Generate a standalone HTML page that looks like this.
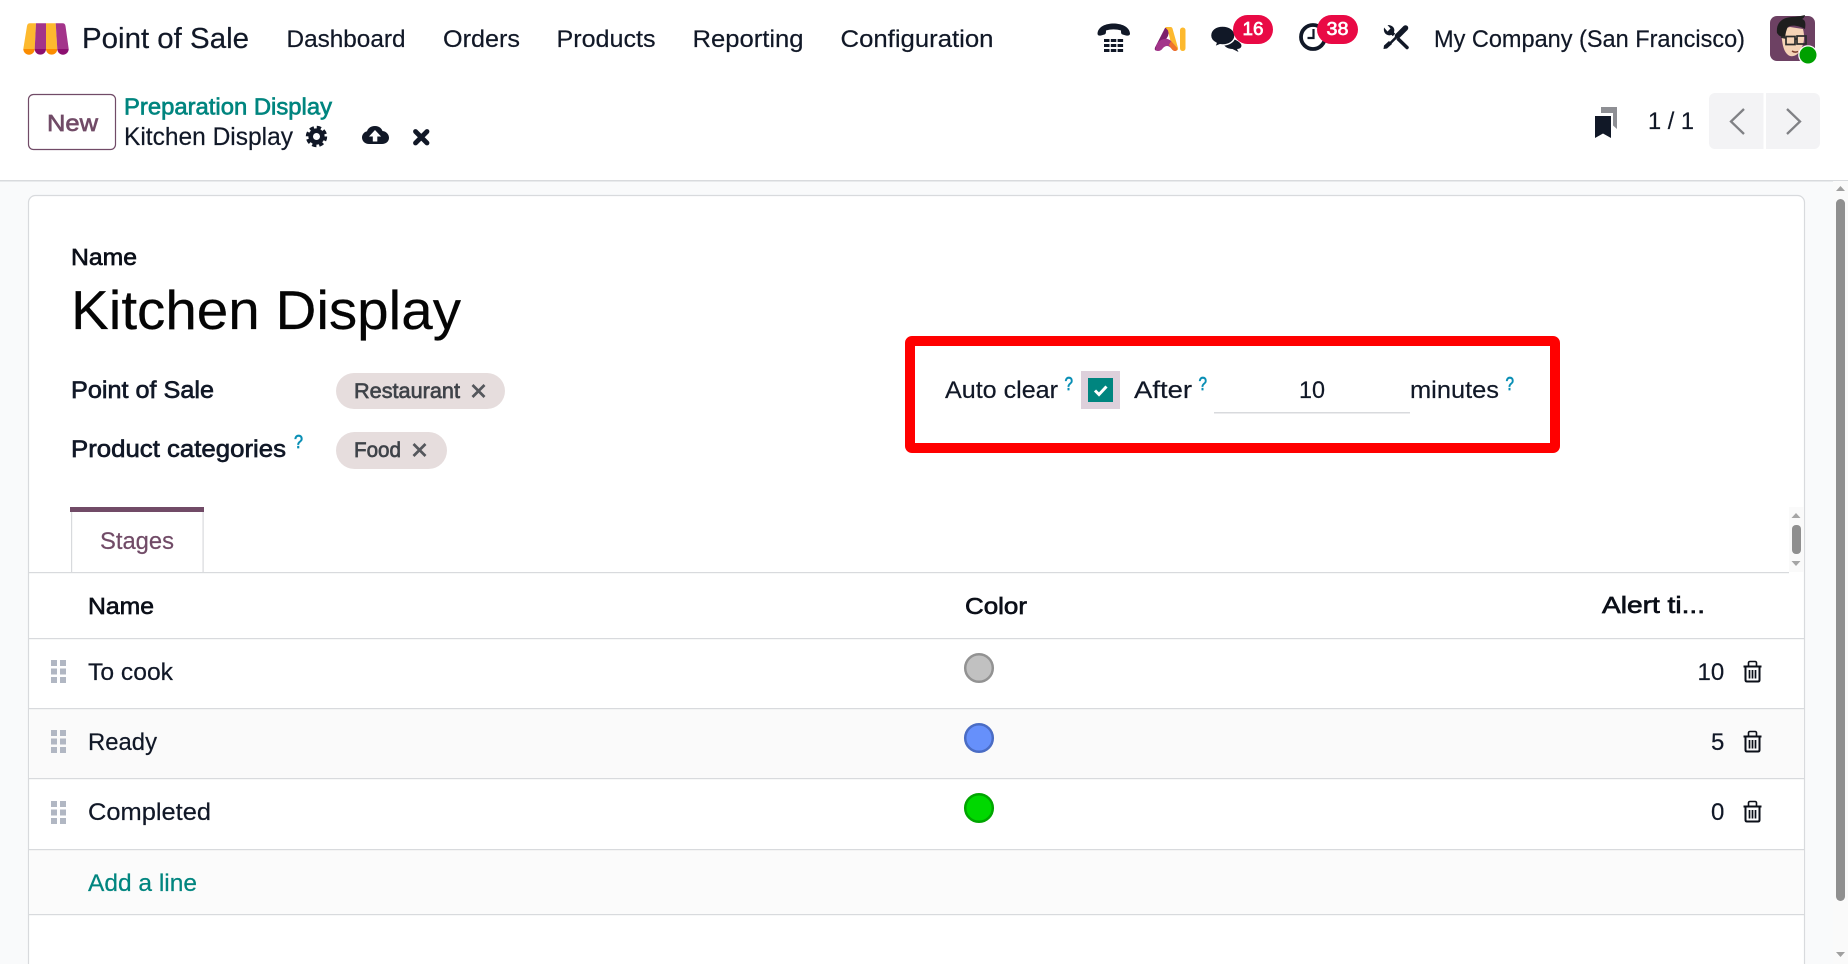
<!DOCTYPE html>
<html lang="en"><head><meta charset="utf-8"><title>Kitchen Display</title>
<style>
html,body{margin:0;padding:0;width:1848px;height:964px;overflow:hidden;background:#fff}
svg{display:block;position:absolute;left:0;top:0}
text{font-family:"Liberation Sans",sans-serif;fill:#111827;stroke:#111827;stroke-width:.2px}
text.m{stroke:currentColor;stroke-width:.65px}
text.l{stroke:currentColor;stroke-width:.2px}
</style></head><body>
<svg width="1848" height="964" viewBox="0 0 1848 964" xmlns="http://www.w3.org/2000/svg">
<!-- backgrounds -->
<rect width="1848" height="964" fill="#fff"/>
<rect y="181" width="1848" height="783" fill="#f9fafb"/>
<rect y="180" width="1848" height="1.5" fill="#d8dadd"/>
<rect x="28.5" y="195.5" width="1776" height="790" rx="7" fill="#fff" stroke="#d8dadd" stroke-width="1.2"/>
<!-- main scrollbar -->
<rect x="1833" y="181" width="15" height="783" fill="#fafafa"/>
<rect x="1836" y="199" width="9" height="702" rx="4.5" fill="#8f8f8f"/>
<path d="M1836 191l4.500-5 4.500 5z" fill="#a0a0a0"/><path d="M1836 952l4.500 5 4.500-5z" fill="#a0a0a0"/>

<!-- logo -->
<path d="M30 23.300H36L34.700 49H23.300L27 26Q27.500 23.300 30 23.300z" fill="#fdb92e"/>
<path d="M36 23.300H46V49H34.700z" fill="#a3348a"/>
<path d="M46 23.300H55.700L57.300 49H46z" fill="#fdb92e"/>
<path d="M55.700 23.300H62.500Q65 23.300 65.500 26L68.700 49H57.300z" fill="#a3348a"/>
<path d="M23.300 49h11.400a5.700 5.700 0 0 1-11.400 0z" fill="#fb8c00"/>
<path d="M34.700 49H46a5.650 5.650 0 0 1-11.300 0z" fill="#8c0f70"/>
<path d="M46 49h11.300a5.650 5.650 0 0 1-11.300 0z" fill="#fb8c00"/>
<path d="M57.300 49h11.400a5.700 5.700 0 0 1-11.400 0z" fill="#8c0f70"/>

<!-- navbar text -->
<text x="82" y="48" font-size="29" textLength="167" lengthAdjust="spacingAndGlyphs">Point of Sale</text>
<text x="286.500" y="47" font-size="24" textLength="119" lengthAdjust="spacingAndGlyphs">Dashboard</text>
<text x="443" y="47" font-size="24" textLength="77" lengthAdjust="spacingAndGlyphs">Orders</text>
<text x="556.500" y="47" font-size="24" textLength="99" lengthAdjust="spacingAndGlyphs">Products</text>
<text x="692.500" y="47" font-size="24" textLength="111" lengthAdjust="spacingAndGlyphs">Reporting</text>
<text x="840.500" y="47" font-size="24" textLength="153" lengthAdjust="spacingAndGlyphs">Configuration</text>

<!-- phone -->
<path d="M1097.500 33.500C1098 26.500 1106 23.500 1113.500 23.500S1129.500 26.500 1130 33.500C1130 35.500 1128 36 1126 35.500L1122.500 34.500C1121 34 1121 32.500 1121 30.500C1116 29 1111 29 1106 30.500C1106 32.500 1106 34 1104.500 34.500L1101 35.500C1099 36 1097.500 35.500 1097.500 33.500Z" fill="#111827"/>
<g fill="#111827">
<rect x="1104" y="39" width="5.500" height="3"/><rect x="1110.800" y="39" width="5.500" height="3"/><rect x="1117.600" y="39" width="5.500" height="3"/>
<rect x="1104" y="44" width="5.500" height="3"/><rect x="1110.800" y="44" width="5.500" height="3"/><rect x="1117.600" y="44" width="5.500" height="3"/>
<rect x="1104" y="49" width="5.500" height="3"/><rect x="1110.800" y="49" width="5.500" height="3"/><rect x="1117.600" y="49" width="5.500" height="3"/>
</g>
<!-- AI -->
<path d="M1165 28h5l-2 8-6 10-5 4.500q-3 .5-2-3z" fill="#7d1f6c"/>
<path d="M1165 27h5.500q1.500 0 2 1.500l5.500 19.500q.5 2.500-2 2.500l-5-7-3-13z" fill="#fdb92e"/>
<path d="M1156 48q0-5 5-8 6-3 10 1l6 7q.5 3-2 3-2 0-4-3-4-4-8 0-2 3-5 3t-2-3z" fill="#a3348a"/>
<path d="M1171 41l6 7q.5 3-2 3-2 0-4-3l-2-3z" fill="#f0742a"/>
<rect x="1180" y="27.500" width="5.500" height="23.500" rx="2.700" fill="#fdb92e"/>
<!-- chat -->
<path d="M1226 38c6 0 12 2 15 6 1.500 3-1 5-4 5l1.500 3-6-3c-4 0-8-2-9-5z" fill="#111827"/>
<path d="M1222.500 26c7 0 12.500 4 12.500 9.500s-5.500 9.500-12.500 9.500l-2.500-.2-5.500 2.200 1.500-3.800c-3.300-1.700-5.500-4.500-5.500-7.700 0-5.500 5-9.500 12-9.500z" fill="#111827" stroke="#fff" stroke-width="1.500"/>
<rect x="1233" y="15" width="40" height="29" rx="14.500" fill="#e90a45"/>
<text x="1242.500" y="35" font-size="18" color="#fff" style="fill:#fff" textLength="21" lengthAdjust="spacingAndGlyphs" class="m">16</text>
<!-- clock -->
<circle cx="1313" cy="37" r="12" fill="none" stroke="#111827" stroke-width="3.800"/>
<path d="M1313.500 29v9h-6" fill="none" stroke="#111827" stroke-width="2.200"/>
<rect x="1317" y="15" width="41" height="29" rx="14.500" fill="#e90a45"/>
<text x="1326.500" y="35" font-size="18" color="#fff" style="fill:#fff" textLength="22" lengthAdjust="spacingAndGlyphs" class="m">38</text>
<!-- tools -->
<path d="M1391 32l16 15.500" stroke="#111827" stroke-width="3.500" stroke-linecap="round" fill="none"/>
<path d="M1384 27.500q-.8 5 2.500 7t6.500-.5q2.500-3.500.5-6.500-2-2.500-6-2.500l3 3.500-3 3-3.500-4z" fill="#111827"/>
<path d="M1398 34.500l-5.500 5.500" stroke="#fff" stroke-width="5" fill="none"/>
<path d="M1405.500 28l-8 8" stroke="#111827" stroke-width="5.500" stroke-linecap="round" fill="none"/>
<path d="M1397 36.500l-7 7" stroke="#111827" stroke-width="2.600" fill="none"/>
<path d="M1389 41l3 3-5 4.500-3.500.5.500-3.500z" fill="#111827"/>
<text x="1434" y="47" font-size="24" textLength="311" lengthAdjust="spacingAndGlyphs">My Company (San Francisco)</text>
<!-- avatar -->
<rect x="1770" y="16" width="45" height="45" rx="7" fill="#6d4163"/>
<path d="M1782 40c-1-9 2-12 8-13l13 2c2 8 1 14-1 18-3 7-7 10-12 9-5-2-7-8-8-16z" fill="#f5d3b6"/>
<path d="M1777 33c-1-8 3-13 9-15 6-1.500 12-1 19-3-.5 2-1 3-3 4 3 1 4 3 3 10-5-3-11-4-15-3-3 1-3 3-4 6l-1 5-4-.5-2-1z" fill="#1e1e1e"/>
<g fill="none" stroke="#2b2b2b" stroke-width="1.700"><rect x="1786" y="36.500" width="9" height="8"/><rect x="1797" y="36" width="9" height="8"/><path d="M1781 37l5 1M1795 39h2"/></g>
<path d="M1792 51q3 2 6 .5" stroke="#7a3b2b" stroke-width="1.500" fill="none"/>
<circle cx="1808" cy="55" r="9.800" fill="#fff"/><circle cx="1808" cy="55" r="8.500" fill="#00a000"/>

<!-- control panel -->
<rect x="28.500" y="94.500" width="87" height="55" rx="5" fill="#fff" stroke="#714b67" stroke-width="1.200"/>
<text x="47" y="131" font-size="23" style="fill:#714b67" color="#714b67" class="m" textLength="51" lengthAdjust="spacingAndGlyphs">New</text>
<text x="124" y="114.500" font-size="23" style="fill:#00857f" color="#00857f" class="m" textLength="208" lengthAdjust="spacingAndGlyphs">Preparation Display</text>
<text x="124" y="145" font-size="25" textLength="169" lengthAdjust="spacingAndGlyphs">Kitchen Display</text>
<!-- gear -->
<circle cx="316.500" cy="136.500" r="8.700" fill="none" stroke="#111827" stroke-width="4" stroke-dasharray="4.100 2.730"/>
<circle cx="316.500" cy="136.500" r="5.800" fill="none" stroke="#111827" stroke-width="4.600"/>
<!-- cloud upload -->
<path d="M369 144c-4 0-7-3-7-6.500 0-3 2-5.500 5-6.300 1-3 4-5.200 8-5.200 3.500 0 6.500 2 7.500 5 4 .5 6.500 3.500 6.500 6.800 0 3.700-3 6.200-7 6.200z" fill="#111827"/>
<path d="M375 130l-6 6.500h3.800v5h4.500v-5h3.800z" fill="#fff"/>
<!-- discard x -->
<path d="M415.500 131.500l11.500 11.500M427 131.500l-11.500 11.500" stroke="#111827" stroke-width="4.800" stroke-linecap="round" fill="none"/>

<!-- pager -->
<path d="M1601 107h16v22l-4-3.500V113h-12z" fill="#8e8f94"/>
<path d="M1595 116h16v22l-8-4.500-8 4.500z" fill="#111827" stroke="#fff" stroke-width="0"/>
<text x="1648" y="129" font-size="24" textLength="46" lengthAdjust="spacingAndGlyphs">1 / 1</text>
<path d="M1715 93h48.500v56H1715a6 6 0 0 1-6-6V99a6 6 0 0 1 6-6z" fill="#f3f3f5"/>
<path d="M1766 93h48a6 6 0 0 1 6 6v44a6 6 0 0 1-6 6h-48z" fill="#f3f3f5"/>
<path d="M1744 109l-13 12.500 13 12.500" fill="none" stroke="#808185" stroke-width="2.300"/>
<path d="M1787 109l13 12.500-13 12.500" fill="none" stroke="#808185" stroke-width="2.300"/>

<!-- form -->
<text x="71" y="265" font-size="23" style="fill:#0b0f18" color="#0b0f18" class="m" textLength="66" lengthAdjust="spacingAndGlyphs">Name</text>
<text x="71" y="329" font-size="55" style="fill:#050505;stroke:#050505" textLength="390" lengthAdjust="spacingAndGlyphs">Kitchen Display</text>
<text x="71" y="398" font-size="24" color="#111827" class="m" textLength="143" lengthAdjust="spacingAndGlyphs">Point of Sale</text>
<text x="71" y="457" font-size="24" color="#111827" class="m" textLength="215" lengthAdjust="spacingAndGlyphs">Product categories</text>
<text x="294" y="448" font-size="18" color="#0a8fb5" style="fill:#0a8fb5" class="m" textLength="9" lengthAdjust="spacingAndGlyphs">?</text>
<rect x="336" y="373" width="169" height="36" rx="18" fill="#e6dddd"/>
<text x="354" y="398" font-size="21" style="fill:#3f4349" color="#3f4349" class="m" textLength="106" lengthAdjust="spacingAndGlyphs">Restaurant</text>
<path d="M472.500 385l12 12M484.500 385l-12 12" stroke="#55575c" stroke-width="2.700" fill="none"/>
<rect x="336" y="432" width="111" height="37" rx="18.500" fill="#e6dddd"/>
<text x="354" y="457" font-size="21" style="fill:#3f4349" color="#3f4349" class="m" textLength="47" lengthAdjust="spacingAndGlyphs">Food</text>
<path d="M413.500 444l12 12M425.500 444l-12 12" stroke="#55575c" stroke-width="2.700" fill="none"/>

<!-- red box -->
<rect x="910" y="341" width="645" height="107" rx="2" fill="#fff" stroke="#ff0000" stroke-width="10"/>
<text x="945" y="398" font-size="24" textLength="113" lengthAdjust="spacingAndGlyphs">Auto clear</text>
<text x="1064.500" y="390" font-size="18" color="#0a8fb5" style="fill:#0a8fb5" class="m" textLength="8.500" lengthAdjust="spacingAndGlyphs">?</text>
<rect x="1081" y="371" width="39" height="38" fill="#ddd0db"/>
<rect x="1088" y="378" width="25" height="24" fill="#00857f"/>
<path d="M1095 390.500l4 4 7.500-8" fill="none" stroke="#fff" stroke-width="3"/>
<text x="1134" y="398" font-size="24" textLength="58" lengthAdjust="spacingAndGlyphs">After</text>
<text x="1198.500" y="390" font-size="18" color="#0a8fb5" style="fill:#0a8fb5" class="m" textLength="8.500" lengthAdjust="spacingAndGlyphs">?</text>
<text x="1299" y="398" font-size="24" textLength="26" lengthAdjust="spacingAndGlyphs">10</text>
<rect x="1214" y="412" width="196" height="1.500" fill="#d8dadd"/>
<text x="1410" y="398" font-size="24" textLength="89" lengthAdjust="spacingAndGlyphs">minutes</text>
<text x="1505.500" y="390" font-size="18" color="#0a8fb5" style="fill:#0a8fb5" class="m" textLength="8.500" lengthAdjust="spacingAndGlyphs">?</text>

<!-- tabs -->
<rect x="29" y="572" width="1760" height="1.200" fill="#d8dadd"/>
<rect x="71" y="512" width="132" height="60" fill="#fff"/>
<rect x="71" y="512" width="1.200" height="60" fill="#d8dadd"/><rect x="202.500" y="512" width="1.200" height="60" fill="#d8dadd"/>
<rect x="70" y="507" width="134" height="5" fill="#714b67"/>
<text x="100" y="549" font-size="24" style="fill:#714b67" color="#714b67" class="l" textLength="74" lengthAdjust="spacingAndGlyphs">Stages</text>
<!-- inner scroll -->
<rect x="1789" y="507" width="15" height="65" fill="#fafafa"/>
<path d="M1791.500 518l4.500-5 4.500 5z" fill="#a5a5a5"/>
<rect x="1792" y="525" width="9" height="29" rx="4" fill="#8f8f8f"/>
<path d="M1791.500 561l4.500 5 4.500-5z" fill="#a5a5a5"/>

<!-- table -->
<rect x="30" y="708" width="1774" height="70" fill="#fafafa"/>
<rect x="30" y="849" width="1774" height="65" fill="#fbfbfb"/>
<g fill="#d8dadd">
<rect x="29" y="638" width="1775" height="1.200"/><rect x="29" y="708" width="1775" height="1.200"/>
<rect x="29" y="778" width="1775" height="1.200"/><rect x="29" y="849" width="1775" height="1.200"/>
<rect x="29" y="914" width="1775" height="1.200"/>
</g>
<text x="88" y="614" font-size="23.500" style="fill:#0b0f18" color="#0b0f18" class="m" textLength="66" lengthAdjust="spacingAndGlyphs">Name</text>
<text x="965" y="614" font-size="23.500" style="fill:#0b0f18" color="#0b0f18" class="m" textLength="62" lengthAdjust="spacingAndGlyphs">Color</text>
<text x="1602" y="613" font-size="23.500" style="fill:#0b0f18" color="#0b0f18" class="m" textLength="103" lengthAdjust="spacingAndGlyphs">Alert ti...</text>
<text x="88" y="680" font-size="24" textLength="85" lengthAdjust="spacingAndGlyphs">To cook</text>
<text x="88" y="750" font-size="24" textLength="69" lengthAdjust="spacingAndGlyphs">Ready</text>
<text x="88" y="820" font-size="24" textLength="123" lengthAdjust="spacingAndGlyphs">Completed</text>
<text x="88" y="891" font-size="24" style="fill:#00857f" color="#00857f" class="l" textLength="109" lengthAdjust="spacingAndGlyphs">Add a line</text>
<g fill="#b1b7c3">
<path d="M51 660h6v6h-6zM60 660h6v6h-6zM51 668.500h6v6h-6zM60 668.500h6v6h-6zM51 677h6v6h-6zM60 677h6v6h-6z"/>
<path d="M51 730h6v6h-6zM60 730h6v6h-6zM51 738.500h6v6h-6zM60 738.500h6v6h-6zM51 747h6v6h-6zM60 747h6v6h-6z"/>
<path d="M51 801h6v6h-6zM60 801h6v6h-6zM51 809.500h6v6h-6zM60 809.500h6v6h-6zM51 818h6v6h-6zM60 818h6v6h-6z"/>
</g>
<circle cx="979" cy="668" r="13.800" fill="#c1c1c1" stroke="#929292" stroke-width="2.500"/>
<circle cx="979" cy="738" r="13.800" fill="#6690fb" stroke="#4a6cc4" stroke-width="2.500"/>
<circle cx="979" cy="808" r="13.800" fill="#00d800" stroke="#00a500" stroke-width="2.500"/>
<text x="1697.500" y="680" font-size="24">10</text>
<text x="1711" y="750" font-size="24">5</text>
<text x="1711" y="820" font-size="24">0</text>
<g fill="none" stroke="#0b0f18">
<path d="M1743.500 666.500h18" stroke-width="2"/>
<path d="M1748.500 666v-3q0-1.500 1.500-1.500h5q1.500 0 1.500 1.500v3" stroke-width="1.600"/>
<path d="M1745.500 666.500v13.500q0 1.500 1.500 1.500h11q1.500 0 1.500-1.500v-13.500" stroke-width="2"/>
<path d="M1749.500 670v8.500M1752.500 670v8.500M1755.500 670v8.500" stroke-width="1.700"/>
</g>
<g fill="none" stroke="#0b0f18" transform="translate(0 70)">
<path d="M1743.500 666.500h18" stroke-width="2"/>
<path d="M1748.500 666v-3q0-1.500 1.500-1.500h5q1.500 0 1.500 1.500v3" stroke-width="1.600"/>
<path d="M1745.500 666.500v13.500q0 1.500 1.500 1.500h11q1.500 0 1.500-1.500v-13.500" stroke-width="2"/>
<path d="M1749.500 670v8.500M1752.500 670v8.500M1755.500 670v8.500" stroke-width="1.700"/>
</g>
<g fill="none" stroke="#0b0f18" transform="translate(0 140)">
<path d="M1743.500 666.500h18" stroke-width="2"/>
<path d="M1748.500 666v-3q0-1.500 1.500-1.500h5q1.500 0 1.500 1.500v3" stroke-width="1.600"/>
<path d="M1745.500 666.500v13.500q0 1.500 1.500 1.500h11q1.500 0 1.500-1.500v-13.500" stroke-width="2"/>
<path d="M1749.500 670v8.500M1752.500 670v8.500M1755.500 670v8.500" stroke-width="1.700"/>
</g>
</svg>
</body></html>
